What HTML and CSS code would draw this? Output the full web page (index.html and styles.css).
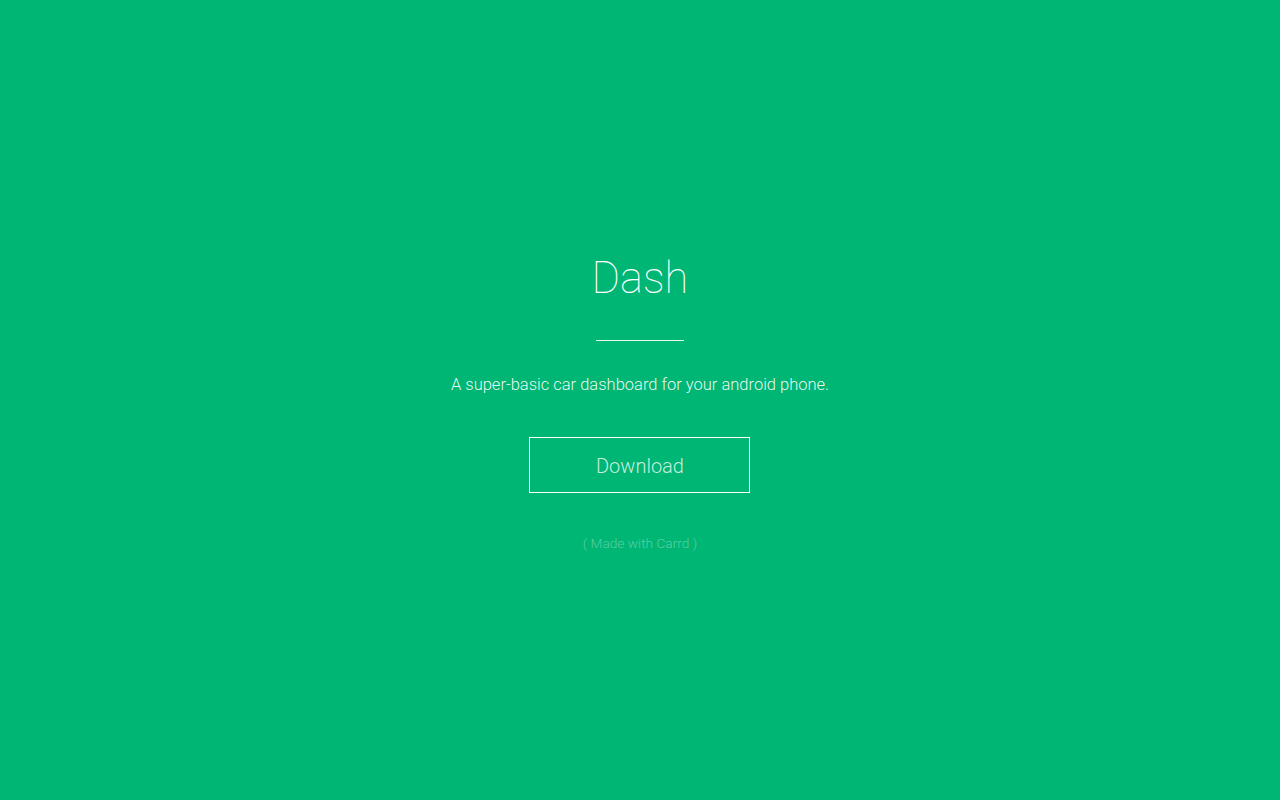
FILE: index.html
```html
<!DOCTYPE html>
<html>
<head>
<meta charset="utf-8">
<link rel="stylesheet" href="styles.css">
</head>
<body>
<main class="page">
  <section class="card">
    <h1 class="title">Dash</h1>
    <hr class="divider">
    <p class="tagline">A super-basic car dashboard for your android phone.</p>
    <a class="button" href="#">Download</a>
    <p class="credit">( Made with Carrd )</p>
  </section>
</main>
</body>
</html>
```
FILE: styles.css
```css
html, body {
  margin: 0;
  padding: 0;
  height: 100%;
}
body {
  background: #00b674;
  font-family: Roboto, "Liberation Sans", sans-serif;
  color: #fff;
}
.page {
  height: 800px;
  display: flex;
  align-items: center;
  justify-content: center;
}
.card {
  display: flex;
  flex-direction: column;
  align-items: center;
  margin-top: 0;
}
.title {
  margin: 0;
  font-size: 43.5px;
  font-weight: 100;
  line-height: 60px;
}
.divider {
  width: 88px;
  height: 1px;
  border: 0;
  background: rgba(255,255,255,0.9);
  margin: 31px 0 0 0;
}
.tagline {
  margin: 33px 0 0 0;
  font-size: 16.5px;
  font-weight: 300;
  line-height: 22px;
  color: rgba(255,255,255,0.92);
}
.button {
  margin-top: 41px;
  width: 219px;
  border: 1px solid #fff;
  display: flex;
  align-items: center;
  justify-content: center;
  color: rgba(255,255,255,0.78);
  text-decoration: none;
  font-size: 20px;
  font-weight: 300;
  padding-top: 3px;
  box-sizing: content-box;
  height: 51px;
}
.credit {
  margin: 41px 0 0 0;
  font-size: 13.7px;
  font-weight: 300;
  color: rgba(255,255,255,0.35);
  line-height: 18px;
}
```
